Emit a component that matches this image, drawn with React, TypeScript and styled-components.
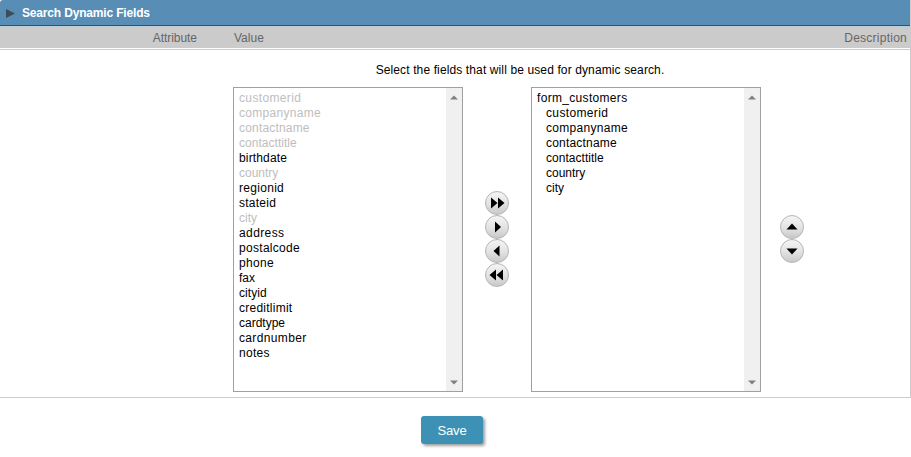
import React from "react";
import styled, { createGlobalStyle } from "styled-components";

const GlobalStyle = createGlobalStyle`
  * { box-sizing: border-box; }
  body { margin: 0; background: #fff; overflow: hidden; }
`;

const Page = styled.div`
  width: 911px;
  height: 457px;
  font: 12px/15px "Liberation Sans", Arial, sans-serif;
  color: #000;
`;

const Panel = styled.section`
  height: 398px;
  border-right: 1px solid #ccc;
  border-bottom: 1px solid #ccc;
`;

const TitleBar = styled.header`
  display: flex;
  align-items: center;
  height: 26px;
  padding: 1px 0 0 6px;
  gap: 7px;
  background: #588db6;
  border-bottom: 1px solid #3c4f5e;
  border-radius: 3px 0 0 0;
  color: #fff;
  font-weight: bold;
`;

const HeaderRow = styled.div`
  display: grid;
  grid-template-columns: 197px 1fr auto;
  column-gap: 37px;
  align-items: center;
  height: 22px;
  padding: 2px 3px 0 0;
  background: #cbcbcb;
  border-top: 1px solid #bfcbd3;
  color: #666;
`;

const HeaderCell = styled.span<{ $end?: boolean }>`
  text-align: ${(p) => (p.$end ? "right" : "left")};
`;

const Divider = styled.div`
  height: 1px;
  margin-top: 1px;
  background: #ccc;
`;

const Content = styled.div`
  width: 574px;
  margin-left: 233px;
  padding-top: 13px;
`;

const Hint = styled.p`
  margin: 0 0 9px;
  text-align: center;
`;

const Transfer = styled.div`
  display: flex;
  align-items: center;
`;

const ListBox = styled.div`
  display: flex;
  width: 230px;
  height: 305px;
  border: 1px solid #a0a0a0;
  background: #fff;
`;

const Options = styled.ul`
  flex: 1;
  margin: 0;
  padding: 3px 0 0 5px;
  list-style: none;
`;

const Option = styled.li<{ $muted?: boolean; $nested?: boolean; $tracking: number }>`
  height: 15px;
  padding-left: ${(p) => (p.$nested ? 9 : 0)}px;
  color: ${(p) => (p.$muted ? "#bebebe" : "#000")};
  letter-spacing: ${(p) => p.$tracking}px;
`;

const Track = styled.div`
  display: flex;
  flex-direction: column;
  justify-content: space-between;
  align-items: center;
  width: 16px;
  padding: 7px 0 6px;
  background: #f0f0f0;
`;

const Controls = styled.div<{ $inset: number; $after: number }>`
  display: flex;
  flex-direction: column;
  padding-bottom: 2px;
  margin-left: ${(p) => p.$inset}px;
  margin-right: ${(p) => p.$after}px;
`;

const RoundButton = styled.button`
  display: block;
  width: 24px;
  height: 24px;
  padding: 0;
  border: 1px solid #b5b5b5;
  border-radius: 50%;
  background: linear-gradient(#f4f4f4, #e4e4e4 50%, #c9c9c9);

  svg { display: block; }
`;

const Footer = styled.footer`
  display: flex;
  padding: 18px 0 0 421px;
`;

const SaveButton = styled.button`
  width: 62px;
  height: 28px;
  padding: 1px 0 0;
  border: 0;
  border-radius: 3px;
  background: #3d91b4;
  box-shadow: 2px 2px 3px rgba(0, 0, 0, 0.38);
  color: #fff;
  font: 13px/27px "Liberation Sans", Arial, sans-serif;
  letter-spacing: -0.2px;
`;

const Tracked = styled.span<{ $tracking: number }>`
  letter-spacing: ${(p) => p.$tracking}px;
`;

type Field = { name: string; tracking: number; muted?: boolean; nested?: boolean };

const available: Field[] = [
  { name: "customerid", tracking: 0.36, muted: true },
  { name: "companyname", tracking: 0.3, muted: true },
  { name: "contactname", tracking: 0.18, muted: true },
  { name: "contacttitle", tracking: 0.03, muted: true },
  { name: "birthdate", tracking: 0.15 },
  { name: "country", tracking: 0, muted: true },
  { name: "regionid", tracking: 0.3 },
  { name: "stateid", tracking: 0.25 },
  { name: "city", tracking: 0, muted: true },
  { name: "address", tracking: 0.4 },
  { name: "postalcode", tracking: 0.3 },
  { name: "phone", tracking: 0.35 },
  { name: "fax", tracking: 0 },
  { name: "cityid", tracking: 0.05 },
  { name: "creditlimit", tracking: 0.25 },
  { name: "cardtype", tracking: 0 },
  { name: "cardnumber", tracking: 0.35 },
  { name: "notes", tracking: 0.3 },
];

const selected: Field[] = [
  { name: "form_customers", tracking: 0.32 },
  { name: "customerid", tracking: 0.36, nested: true },
  { name: "companyname", tracking: 0.3, nested: true },
  { name: "contactname", tracking: 0.2, nested: true },
  { name: "contacttitle", tracking: 0.03, nested: true },
  { name: "country", tracking: 0, nested: true },
  { name: "city", tracking: 0, nested: true },
];

const glyphs = {
  "Add all": "M5 5.5L11.5 11L5 16.5ZM12 5.5L18.5 11L12 16.5Z",
  Add: "M9 5.5L15 11L9 16.5Z",
  Remove: "M13.5 5.5L7.5 11L13.5 16.5Z",
  "Remove all": "M10 5.5L3.5 11L10 16.5ZM17 5.5L10.5 11L17 16.5Z",
  "Move up": "M5.5 13.5L11 7.5L16.5 13.5Z",
  "Move down": "M5.5 8.5L11 14.5L16.5 8.5Z",
};

const Control = ({ action }: { action: keyof typeof glyphs }) => (
  <RoundButton aria-label={action}>
    <svg width="22" height="22" viewBox="0 0 22 22">
      <path d={glyphs[action]} />
    </svg>
  </RoundButton>
);

const FieldList = ({ fields }: { fields: Field[] }) => (
  <ListBox>
    <Options>
      {fields.map((f) => (
        <Option key={f.name} $muted={f.muted} $nested={f.nested} $tracking={f.tracking}>
          {f.name}
        </Option>
      ))}
    </Options>
    <Track>
      <svg width="8" height="5" viewBox="0 0 8 5"><path d="M0 4.5L4 .5L8 4.5Z" fill="#808080" /></svg>
      <svg width="8" height="5" viewBox="0 0 8 5"><path d="M0 .5L4 4.5L8 .5Z" fill="#808080" /></svg>
    </Track>
  </ListBox>
);

export default function App() {
  return (
    <Page>
      <GlobalStyle />
      <Panel>
        <TitleBar>
          <svg width="9" height="9" viewBox="0 0 9 9"><path d="M0 0L9 4.5L0 9Z" fill="#3b4c5a" /></svg>
          <Tracked $tracking={-0.17}>Search Dynamic Fields</Tracked>
        </TitleBar>
        <HeaderRow>
          <HeaderCell $end><Tracked $tracking={-0.05}>Attribute</Tracked></HeaderCell>
          <HeaderCell>Value</HeaderCell>
          <HeaderCell $end><Tracked $tracking={0.25}>Description</Tracked></HeaderCell>
        </HeaderRow>
        <Divider />
        <Content>
          <Hint><Tracked $tracking={0.12}>Select the fields that will be used for dynamic search.</Tracked></Hint>
          <Transfer>
            <FieldList fields={available} />
            <Controls $inset={22} $after={22}>
              <Control action="Add all" />
              <Control action="Add" />
              <Control action="Remove" />
              <Control action="Remove all" />
            </Controls>
            <FieldList fields={selected} />
            <Controls $inset={19} $after={0}>
              <Control action="Move up" />
              <Control action="Move down" />
            </Controls>
          </Transfer>
        </Content>
      </Panel>
      <Footer><SaveButton>Save</SaveButton></Footer>
    </Page>
  );
}
